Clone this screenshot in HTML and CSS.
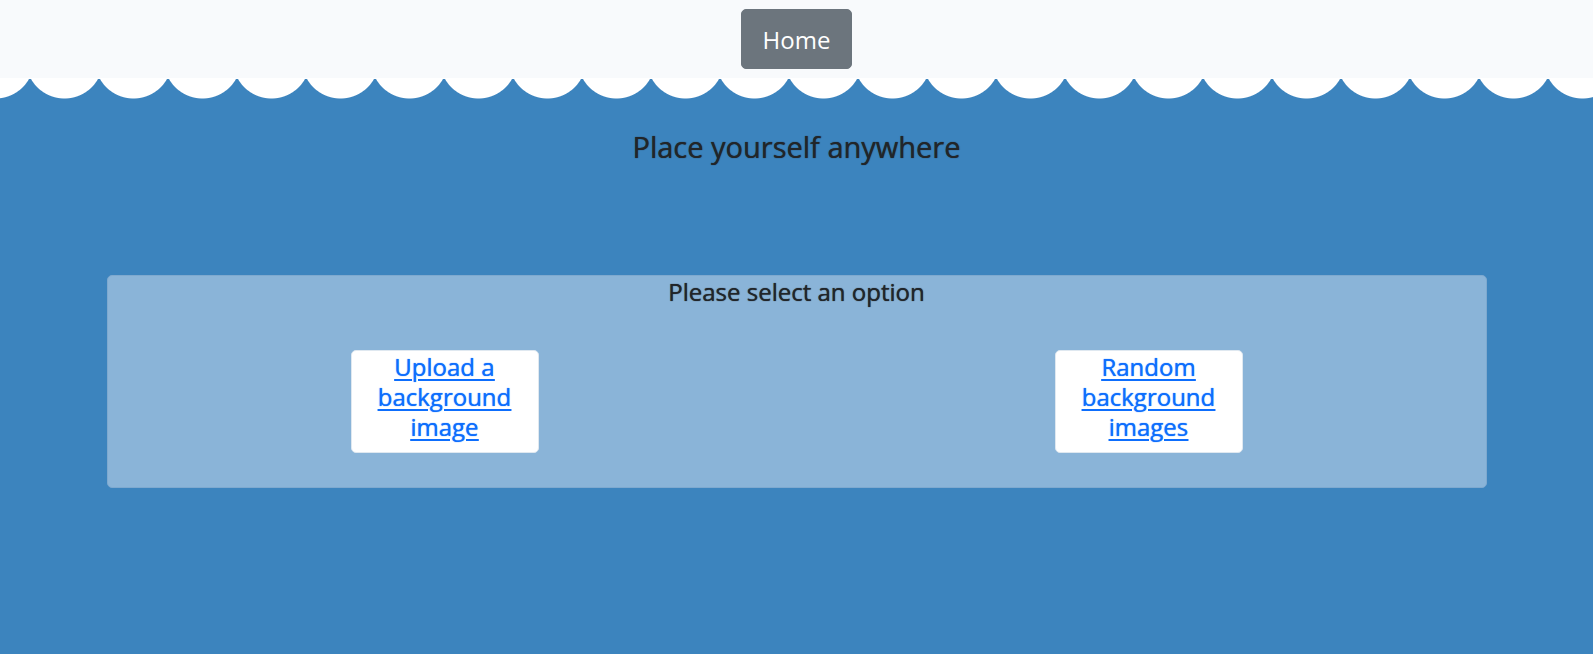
FILE: index.html
```
<!DOCTYPE html>
<html lang="en">
<head>
<meta charset="utf-8">
<title>Place yourself anywhere</title>
<link rel="stylesheet" href="styles.css">
</head>
<body>
<nav class="topbar"><button class="home-button" type="button">Home</button></nav>
<div class="scallops"></div>
<main class="content">
<h1 class="title">Place yourself anywhere</h1>
<section class="panel">
<h2 class="panel-title">Please select an option</h2>
<div class="options">
<div class="option-column"><h2 class="option-card"><a href="#upload">Upload a background image</a></h2></div>
<div class="option-column"><h2 class="option-card"><a href="#random">Random background images</a></h2></div>
</div>
</section>
</main>
</body>
</html>
```
FILE: styles.css
```
* { box-sizing: border-box; }
body {
  margin: 0;
  background: #3c84be;
  color: #212529;
  font-family: "Segoe UI", "Open Sans", "Noto Sans", sans-serif;
  font-size: 24px;
  line-height: 30px;
}
h1, h2 {
  margin: 0;
  font-weight: 500;
  text-shadow: 0 0 1px currentColor;
}
.topbar {
  display: flex;
  justify-content: center;
  padding: 9px 0;
  background: #f8fafc;
}
.home-button {
  padding: 15px 21px 13px;
  border: 1px solid #6c757d;
  border-radius: 5px;
  background: #6c757d;
  color: #fff;
  font: inherit;
}
.scallops {
  height: 22px;
  border-top: 1px solid #fff;
  background: radial-gradient(circle at 50% -19px, #fff 38px, transparent 39px) 30px 0 / 69px 21px repeat-x;
}
.content {
  max-width: 1380px;
  margin: 0 auto;
  padding-top: 27px;
  text-align: center;
}
.title { font-size: 29px; line-height: 40px; }
.panel {
  margin-top: 108px;
  padding-bottom: 34px;
  border: 1px solid #7ea9cf;
  border-radius: 5px;
  background: #8ab4d8;
}
.panel-title { font-size: 24px; line-height: 32px; }
.options {
  display: flex;
  margin: 42px -15px 0;
}
.option-column {
  flex: 1;
  display: flex;
  justify-content: center;
}
.option-card {
  width: 188px;
  padding: 1px 20px 10px;
  border: 1px solid #dfe8f0;
  border-radius: 5px;
  background: #fff;
  font-size: 24px;
}
.option-card a {
  color: #0d6efd;
  text-shadow: 0 0 1px currentColor;
  text-decoration-thickness: 2px;
  text-underline-offset: 3px;
}
```
